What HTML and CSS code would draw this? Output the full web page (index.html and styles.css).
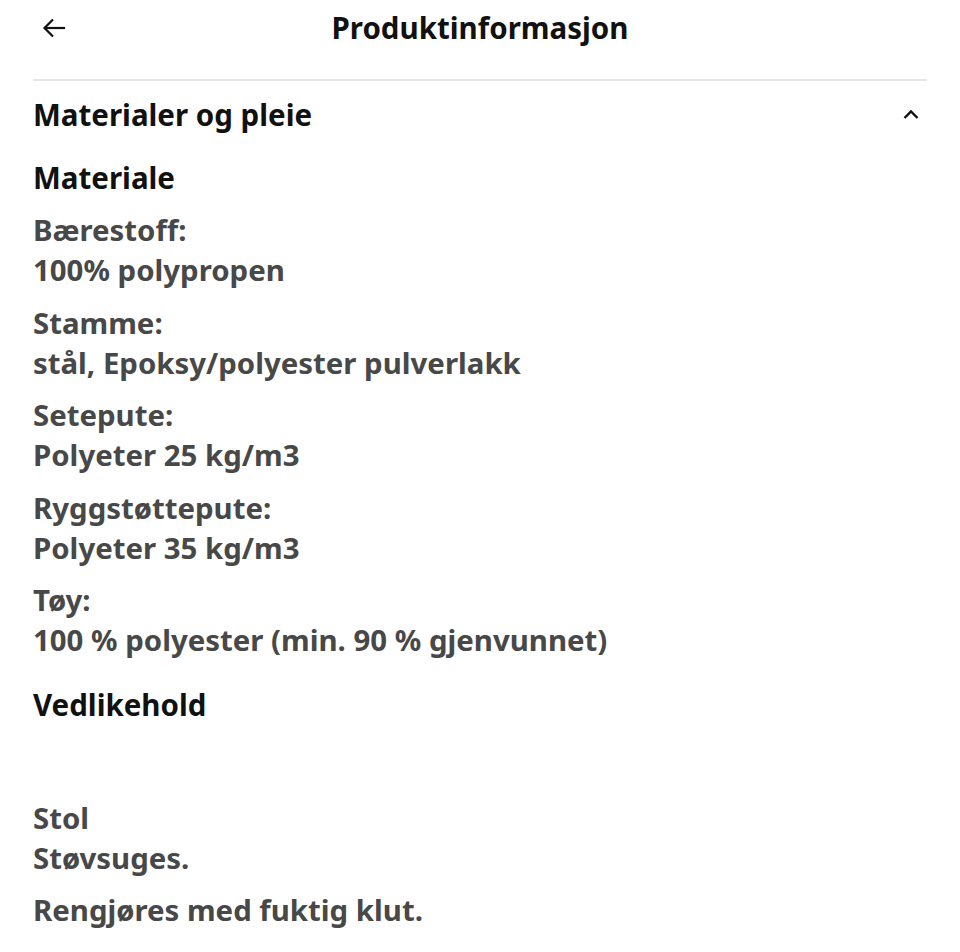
FILE: index.html
```html
<!DOCTYPE html>
<html lang="no">
<head>
<meta charset="utf-8">
<title>Produktinformasjon</title>
<link rel="stylesheet" href="styles.css">
</head>
<body>
<div class="page">
  <header class="topbar">
    <button class="back" aria-label="Tilbake">
      <svg width="24" height="24" viewBox="0 0 24 24" fill="none" stroke="#111" stroke-width="2.2" stroke-linecap="square">
        <path d="M22 12H3.5"/>
        <path d="M11 3.5L2.5 12l8.5 8.5" stroke-linecap="butt"/>
      </svg>
    </button>
    <h1 class="title">Produktinformasjon</h1>
  </header>
  <div class="divider"></div>
  <section class="accordion">
    <div class="acc-head">
      <h2 class="acc-title">Materialer og pleie</h2>
      <svg class="chev" width="16" height="10" viewBox="0 0 16 10" fill="none" stroke="#111" stroke-width="2.4">
        <path d="M1.5 9L8 2.5 14.5 9"/>
      </svg>
    </div>
    <h3 class="sub">Materiale</h3>
    <div class="group"><p>Bærestoff:</p><p>100% polypropen</p></div>
    <div class="group"><p>Stamme:</p><p>stål, Epoksy/polyester pulverlakk</p></div>
    <div class="group"><p>Setepute:</p><p>Polyeter 25 kg/m3</p></div>
    <div class="group"><p>Ryggstøttepute:</p><p>Polyeter 35 kg/m3</p></div>
    <div class="group"><p>Tøy:</p><p>100 % polyester (min. 90 % gjenvunnet)</p></div>
    <h3 class="sub care">Vedlikehold</h3>
    <div class="group stol"><p>Stol</p><p>Støvsuges.</p></div>
    <div class="group"><p>Rengjøres med fuktig klut.</p></div>
  </section>
</div>
</body>
</html>
```
FILE: styles.css
```css
* { box-sizing: border-box; }
html, body { margin: 0; padding: 0; background: #fff; }
body {
  font-family: "Noto Sans", "Open Sans", sans-serif;
  color: #111;
}
.page { padding: 0 33px; }
.topbar {
  height: 56px;
  display: flex;
  align-items: center;
  justify-content: center;
  position: relative;
}
.back {
  position: absolute;
  left: 9px;
  top: 16px;
  width: 24px;
  height: 24px;
  padding: 0;
  border: 0;
  background: none;
  display: flex;
}
.title {
  margin: 0;
  font-size: 29.5px;
  font-weight: 700;
  line-height: 40px;
  color: #111;
}
.divider {
  margin-top: 23px;
  height: 2px;
  background: #e5e5e5;
}
.acc-head {
  display: flex;
  align-items: center;
  justify-content: space-between;
  height: 67px;
}
.acc-title {
  margin: 0;
  font-size: 29.5px;
  font-weight: 700;
  line-height: 40px;
}
.chev { margin-right: 8px; margin-top: -2px; }
.sub {
  margin: 0;
  font-size: 29.5px;
  font-weight: 700;
  line-height: 40px;
  padding: 10px 0 12px;
}
.group { padding-bottom: 12.5px; }
.group p {
  margin: 0;
  font-size: 29.4px;
  font-weight: 700;
  line-height: 40px;
  color: #484848;
}
.care { padding-top: 12px; }
.stol { padding-top: 61px; }
```
